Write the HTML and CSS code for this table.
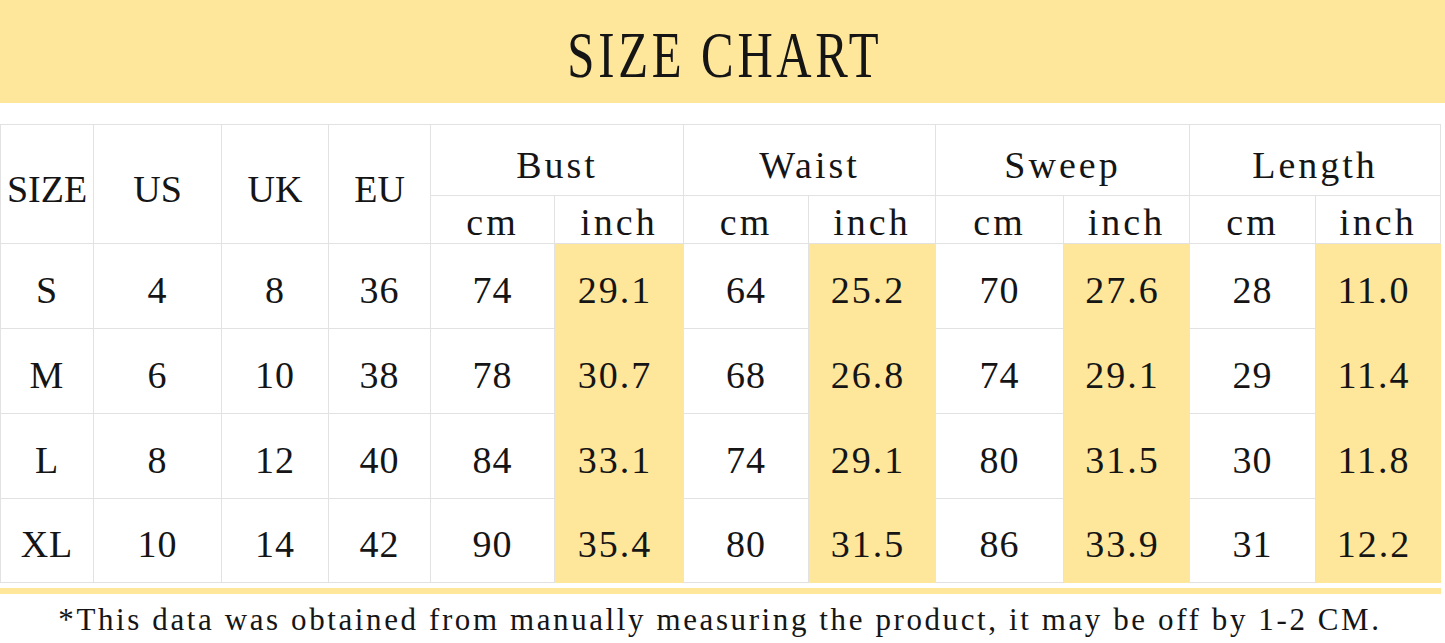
FILE: index.html
```html
<!DOCTYPE html>
<html lang="en">
<head>
<meta charset="utf-8">
<title>Size Chart</title>
<link rel="stylesheet" href="styles.css">
</head>
<body>
<header class="banner">
  <h1 class="title"><span class="title-text">SIZE CHART</span></h1>
</header>

<table class="chart">
  <colgroup>
    <col class="c-size"><col class="c-us"><col class="c-uk"><col class="c-eu">
    <col class="c-bcm"><col class="c-bin">
    <col class="c-wcm"><col class="c-win">
    <col class="c-scm"><col class="c-sin">
    <col class="c-lcm"><col class="c-lin">
  </colgroup>
  <thead>
    <tr class="head-top">
      <th rowspan="2" class="size-head">SIZE</th>
      <th rowspan="2" class="size-head">US</th>
      <th rowspan="2" class="size-head">UK</th>
      <th rowspan="2" class="size-head">EU</th>
      <th colspan="2">Bust</th>
      <th colspan="2">Waist</th>
      <th colspan="2">Sweep</th>
      <th colspan="2">Length</th>
    </tr>
    <tr class="head-units">
      <th>cm</th><th>inch</th>
      <th>cm</th><th>inch</th>
      <th>cm</th><th>inch</th>
      <th>cm</th><th>inch</th>
    </tr>
  </thead>
  <tbody>
    <tr>
      <td>S</td><td>4</td><td>8</td><td>36</td>
      <td>74</td><td class="inch">29.1</td>
      <td>64</td><td class="inch">25.2</td>
      <td>70</td><td class="inch">27.6</td>
      <td>28</td><td class="inch">11.0</td>
    </tr>
    <tr>
      <td>M</td><td>6</td><td>10</td><td>38</td>
      <td>78</td><td class="inch">30.7</td>
      <td>68</td><td class="inch">26.8</td>
      <td>74</td><td class="inch">29.1</td>
      <td>29</td><td class="inch">11.4</td>
    </tr>
    <tr>
      <td>L</td><td>8</td><td>12</td><td>40</td>
      <td>84</td><td class="inch">33.1</td>
      <td>74</td><td class="inch">29.1</td>
      <td>80</td><td class="inch">31.5</td>
      <td>30</td><td class="inch">11.8</td>
    </tr>
    <tr class="last">
      <td>XL</td><td>10</td><td>14</td><td>42</td>
      <td>90</td><td class="inch">35.4</td>
      <td>80</td><td class="inch">31.5</td>
      <td>86</td><td class="inch">33.9</td>
      <td>31</td><td class="inch">12.2</td>
    </tr>
  </tbody>
</table>

<div class="rule"></div>
<p class="note">*This data was obtained from manually measuring the product, it may be off by 1-2 CM.</p>
</body>
</html>
```

FILE: styles.css
```css
html, body {
  margin: 0;
  padding: 0;
  background: #ffffff;
}

body {
  width: 1445px;
  height: 643px;
  overflow: hidden;
  font-family: "Liberation Serif", "Times New Roman", serif;
  color: #151515;
}

.banner {
  height: 103px;
  background: #fee69a;
  display: flex;
  align-items: center;
  justify-content: center;
}

.title {
  margin: 0;
  padding-top: 6px;
  font-size: 66px;
  font-weight: normal;
  line-height: 1;
}

.title-text {
  display: inline-block;
  transform: scaleX(0.74);
  letter-spacing: 5px;
  margin-right: -5px;
}

.chart {
  margin-top: 21px;
  width: 1440px;
  table-layout: fixed;
  border-collapse: collapse;
  font-size: 38px;
  line-height: 1;
}

.c-size { width: 93px; }
.c-us { width: 128px; }
.c-uk { width: 107px; }
.c-eu { width: 102px; }
.c-bcm { width: 124px; }
.c-bin { width: 129px; }
.c-wcm { width: 125px; }
.c-win { width: 127px; }
.c-scm { width: 128px; }
.c-sin { width: 126px; }
.c-lcm { width: 126px; }
.c-lin { width: 125px; }

.chart th,
.chart td {
  border: 1px solid #e2e2e2;
  padding: 0;
  text-align: center;
  vertical-align: middle;
  font-weight: normal;
  white-space: nowrap;
}

.chart th {
  letter-spacing: 3px;
}

.head-top {
  height: 71px;
}

.head-top th {
  padding-top: 9px;
}

.head-top .size-head {
  letter-spacing: 0;
  padding-top: 9px;
}

.head-units {
  height: 48px;
}

.head-units th {
  padding-top: 4px;
}

.chart tbody tr {
  height: 85px;
}

.chart tbody tr.last {
  height: 84px;
}

.chart td {
  padding-top: 7px;
  letter-spacing: 1px;
}

.chart td.inch {
  background: #fee69a;
  border-color: #fee69a;
  letter-spacing: 2px;
  padding-right: 8px;
}

.rule {
  width: 1441px;
  height: 6px;
  margin-top: 5px;
  background: #fee69a;
}

.note {
  margin: 10px 0 0;
  width: 1440px;
  text-align: center;
  font-size: 31px;
  line-height: 31px;
  letter-spacing: 2.6px;
}
```
